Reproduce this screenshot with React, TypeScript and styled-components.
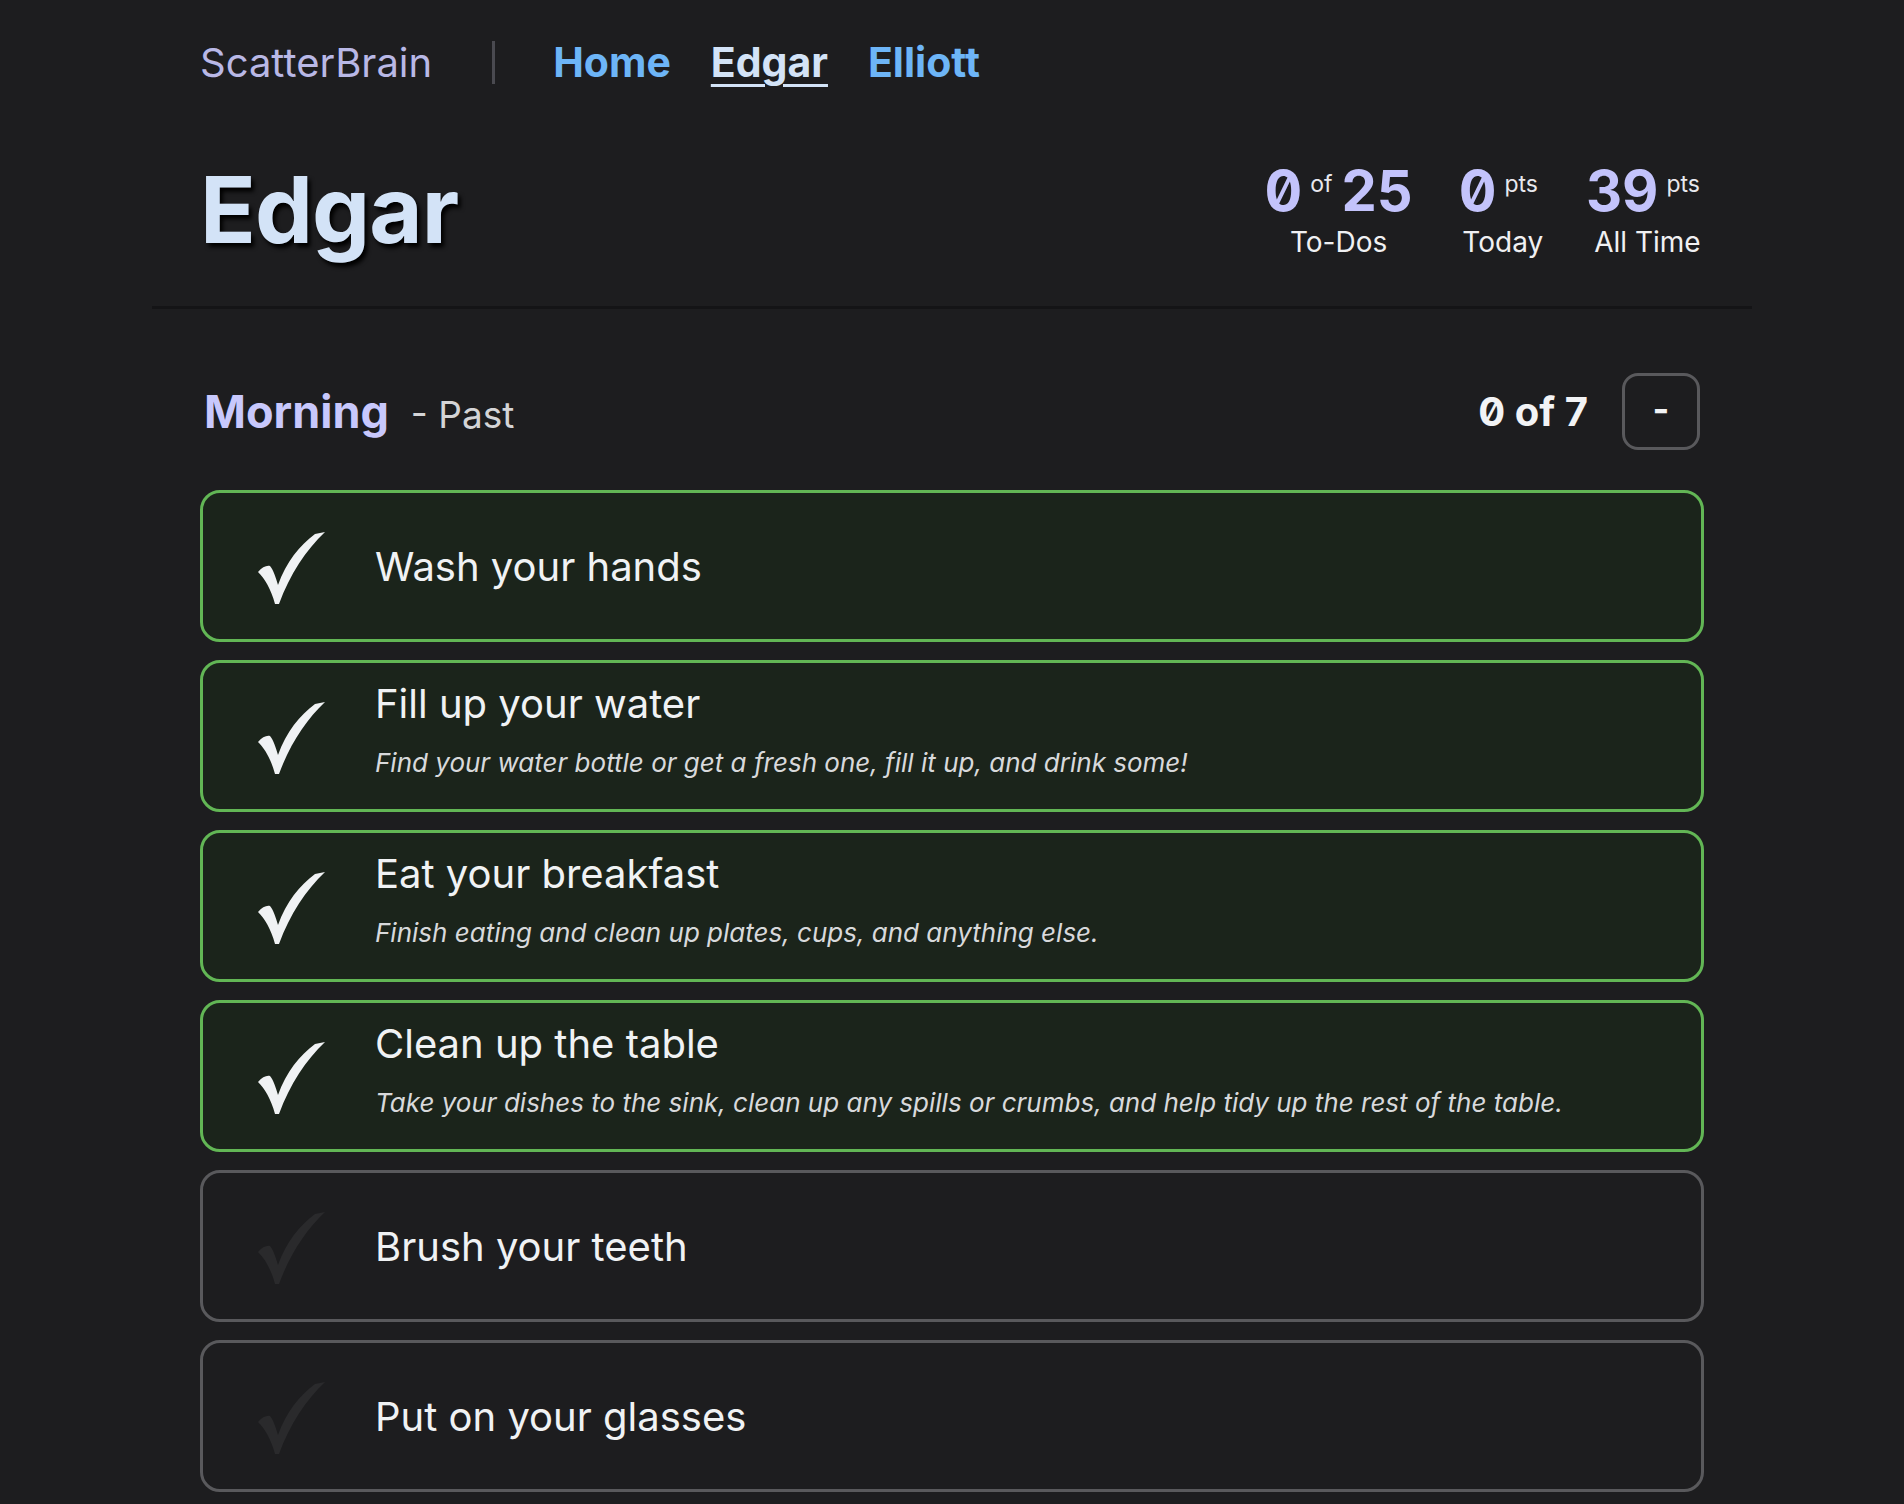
import styled, { createGlobalStyle } from "styled-components";

const GlobalStyle = createGlobalStyle`
  html, body {
    margin: 0;
    padding: 0;
    background-color: #1d1d1f;
  }
  body {
    font-family: Inter, "Noto Sans", sans-serif;
    font-variant-numeric: slashed-zero;
    color: #f0f2f4;
  }
`;

const Page = styled.div`
  max-width: 1600px;
  margin: 0 auto;
  padding-bottom: 40px;
`;

// Top navigation
const Nav = styled.nav`
  display: flex;
  align-items: center;
  height: 124px;
  padding: 0 48px;
  box-sizing: border-box;
`;

const Brand = styled.div`
  font-size: 40px;
  color: #b9b8e6;
`;

const NavDivider = styled.div`
  width: 3px;
  height: 43px;
  background-color: #4a4a50;
  margin: 0 58px 0 60px;
`;

const NavLinks = styled.div`
  display: flex;
  gap: 40px;
`;

const NavLink = styled.a<{ $active?: boolean }>`
  font-size: 41px;
  font-weight: 700;
  color: ${(p) => (p.$active ? "#d3e3f7" : "#6db5f7")};
  text-decoration: ${(p) => (p.$active ? "underline" : "none")};
  text-decoration-thickness: 3px;
  text-underline-offset: 7px;
`;

// Profile header
const Header = styled.header`
  display: flex;
  align-items: center;
  justify-content: space-between;
  padding: 0 43px 0 48px;
  height: 182px;
  border-bottom: 3px solid #141416;
`;

const Name = styled.h1`
  margin: 0;
  font-size: 92px;
  font-weight: 700;
  color: #d3e3f7;
  letter-spacing: -0.01em;
  text-shadow: 3px 4px 4px #000;
  position: relative;
  top: -6px;
`;

const Stats = styled.div`
  display: flex;
  gap: 39px;
  position: relative;
  top: -4px;
`;

const Stat = styled.div`
  display: flex;
  flex-direction: column;
  align-items: center;

  &:first-child {
    margin-right: 7px;
  }
`;

const StatValue = styled.div`
  display: flex;
  align-items: flex-start;
  line-height: 1;
`;

const Big = styled.span`
  font-size: 56px;
  font-weight: 700;
  color: #c3c3fb;
`;

const Sup = styled.span`
  font-size: 23px;
  color: #e8e8ee;
  margin: 10px 9px 0 8px;
`;

const StatLabel = styled.div`
  font-size: 28px;
  color: #f0f0f2;
  margin-top: 6px;
`;

// Section
const Section = styled.section`
  padding: 64px 48px 0;
`;

const SectionHead = styled.div`
  display: flex;
  align-items: center;
  justify-content: space-between;
  margin-bottom: 40px;
`;

const SectionTitle = styled.div`
  display: flex;
  align-items: baseline;
  gap: 22px;
  padding-left: 4px;
`;

const SectionName = styled.h2`
  margin: 0;
  font-size: 45px;
  font-weight: 700;
  color: #c8c8fc;
`;

const SectionState = styled.span`
  font-size: 37px;
  color: #d4d4d6;
`;

const SectionRight = styled.div`
  display: flex;
  align-items: center;
  gap: 34px;
  padding-right: 4px;
`;

const Count = styled.span`
  font-size: 40px;
  font-weight: 700;
  color: #f2f3f5;
`;

const CollapseButton = styled.button`
  width: 78px;
  height: 77px;
  border: 3px solid #59595c;
  border-radius: 16px;
  background: transparent;
  color: #f2f3f5;
  font-family: Inter, sans-serif;
  font-size: 36px;
  font-weight: 700;
  display: flex;
  align-items: center;
  justify-content: center;
  padding-bottom: 6px;
`;

const List = styled.div`
  display: flex;
  flex-direction: column;
  gap: 18px;
`;

const Card = styled.div<{ $done: boolean }>`
  display: flex;
  align-items: center;
  height: 152px;
  box-sizing: border-box;
  border: 3px solid ${(p) => (p.$done ? "#62b655" : "#59595c")};
  border-radius: 20px;
  background-color: ${(p) => (p.$done ? "#1b241b" : "#1d1d1f")};
  padding: 0 0 0 54px;
`;

const Check = styled.div<{ $done: boolean }>`
  width: 70px;
  height: 74px;
  flex-shrink: 0;
  color: ${(p) => (p.$done ? "#f0f2f4" : "#2a2a2c")};
  margin-right: 48px;
  margin-top: 4px;
`;

const Text = styled.div<{ $hasDesc: boolean }>`
  display: flex;
  flex-direction: column;
  gap: 19px;
  margin-top: ${(p) => (p.$hasDesc ? "-15px" : "0")};
`;

const Title = styled.div`
  font-size: 40px;
  color: #f0f2f4;
`;

const Desc = styled.div`
  font-size: 26px;
  font-style: italic;
  color: #d8d9db;
`;

const CheckIcon = () => (
  <svg width="70" height="74" viewBox="0 0 70 74" fill="currentColor">
    <path d="M1 41 C5 36 10 34 13 35 C16 38 19 47 21 54 C29 31 43 14 58 3 L68 1 C49 19 33 43 22 73 L18 73 C14 58 8 48 1 41 Z" />
  </svg>
);

const tasks = [
  { title: "Wash your hands", done: true },
  {
    title: "Fill up your water",
    desc: "Find your water bottle or get a fresh one, fill it up, and drink some!",
    done: true,
  },
  {
    title: "Eat your breakfast",
    desc: "Finish eating and clean up plates, cups, and anything else.",
    done: true,
  },
  {
    title: "Clean up the table",
    desc: "Take your dishes to the sink, clean up any spills or crumbs, and help tidy up the rest of the table.",
    done: true,
  },
  { title: "Brush your teeth", done: false },
  { title: "Put on your glasses", done: false },
  { title: "Get dressed", done: false },
];

const App = () => {
  return (
    <Page>
      <GlobalStyle />
      <Nav>
        <Brand>ScatterBrain</Brand>
        <NavDivider />
        <NavLinks>
          <NavLink>Home</NavLink>
          <NavLink $active>Edgar</NavLink>
          <NavLink>Elliott</NavLink>
        </NavLinks>
      </Nav>

      <Header>
        <Name>Edgar</Name>
        <Stats>
          <Stat>
            <StatValue>
              <Big>0</Big>
              <Sup>of</Sup>
              <Big>25</Big>
            </StatValue>
            <StatLabel>To-Dos</StatLabel>
          </Stat>
          <Stat>
            <StatValue>
              <Big>0</Big>
              <Sup>pts</Sup>
            </StatValue>
            <StatLabel>Today</StatLabel>
          </Stat>
          <Stat>
            <StatValue>
              <Big>39</Big>
              <Sup>pts</Sup>
            </StatValue>
            <StatLabel>All Time</StatLabel>
          </Stat>
        </Stats>
      </Header>

      <Section>
        <SectionHead>
          <SectionTitle>
            <SectionName>Morning</SectionName>
            <SectionState>- Past</SectionState>
          </SectionTitle>
          <SectionRight>
            <Count>0 of 7</Count>
            <CollapseButton>-</CollapseButton>
          </SectionRight>
        </SectionHead>
        <List>
          {tasks.map((t) => (
            <Card key={t.title} $done={t.done}>
              <Check $done={t.done}>
                <CheckIcon />
              </Check>
              <Text $hasDesc={!!t.desc}>
                <Title>{t.title}</Title>
                {t.desc && <Desc>{t.desc}</Desc>}
              </Text>
            </Card>
          ))}
        </List>
      </Section>
    </Page>
  );
};

export default App;
